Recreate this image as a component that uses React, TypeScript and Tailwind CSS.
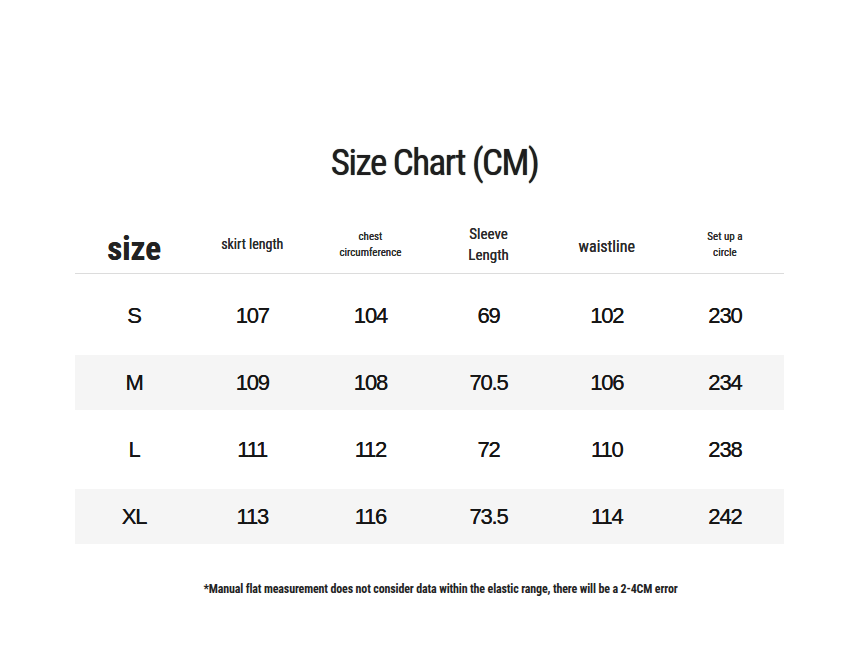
const cond = "font-['Roboto_Condensed','DejaVu_Sans',sans-serif] font-stretch-condensed";

const rows = [
  ["S", "107", "104", "69", "102", "230"],
  ["M", "109", "108", "70.5", "106", "234"],
  ["L", "111", "112", "72", "110", "238"],
  ["XL", "113", "116", "73.5", "114", "242"],
];

export default function App() {
  return (
    <div className="w-[859px] h-[645px] bg-white text-[#222] flex flex-col items-center">
      <h1
        className={`${cond} mt-[140px] h-[46px] text-[37px] leading-[46px] font-normal tracking-[-1.5px] ml-[10px] text-[#1e1e1e] [text-shadow:0_0_0.7px_#1e1e1e]`}
      >
        Size Chart (CM)
      </h1>

      <div className="mt-[30px] w-[709px]">
        {/* header */}
        <div
          className={`${cond} grid grid-cols-6 h-[58px] items-center text-center border-b border-[#dcdcdc] text-[#2a2a2a] [text-shadow:0_0_0.3px_#2a2a2a]`}
        >
          <div className="text-[33px] font-bold leading-none pt-2 text-[#222]">size</div>
          <div className="text-[14px]">skirt length</div>
          <div className="text-[11px] leading-[16px]">
            chest
            <br />
            circumference
          </div>
          <div className="text-[15px] leading-[21px]">
            Sleeve
            <br />
            Length
          </div>
          <div className="text-[16px] pt-1">waistline</div>
          <div className="text-[11px] leading-[16px]">
            Set up a
            <br />
            circle
          </div>
        </div>

        {/* body */}
        <div className="flex flex-col gap-[12px] pt-[14px]">
          {rows.map((r, i) => (
            <div
              key={r[0]}
              className={`grid grid-cols-6 h-[55px] items-center text-center font-['Liberation_Sans',sans-serif] text-[22px] tracking-[-1.2px] text-[#151515] ${
                i % 2 === 1 ? "bg-[#f5f5f5]" : ""
              }`}
            >
              {r.map((c, j) => (
                <div key={j} className="[text-shadow:0_0_0.4px_#151515]">
                  {c}
                </div>
              ))}
            </div>
          ))}
        </div>
      </div>

      <p className={`${cond} mt-[36px] ml-[22px] text-[12px] font-bold tracking-[-0.15px]`}>
        *Manual flat measurement does not consider data within the elastic range, there will be a 2-4CM error
      </p>
    </div>
  );
}
